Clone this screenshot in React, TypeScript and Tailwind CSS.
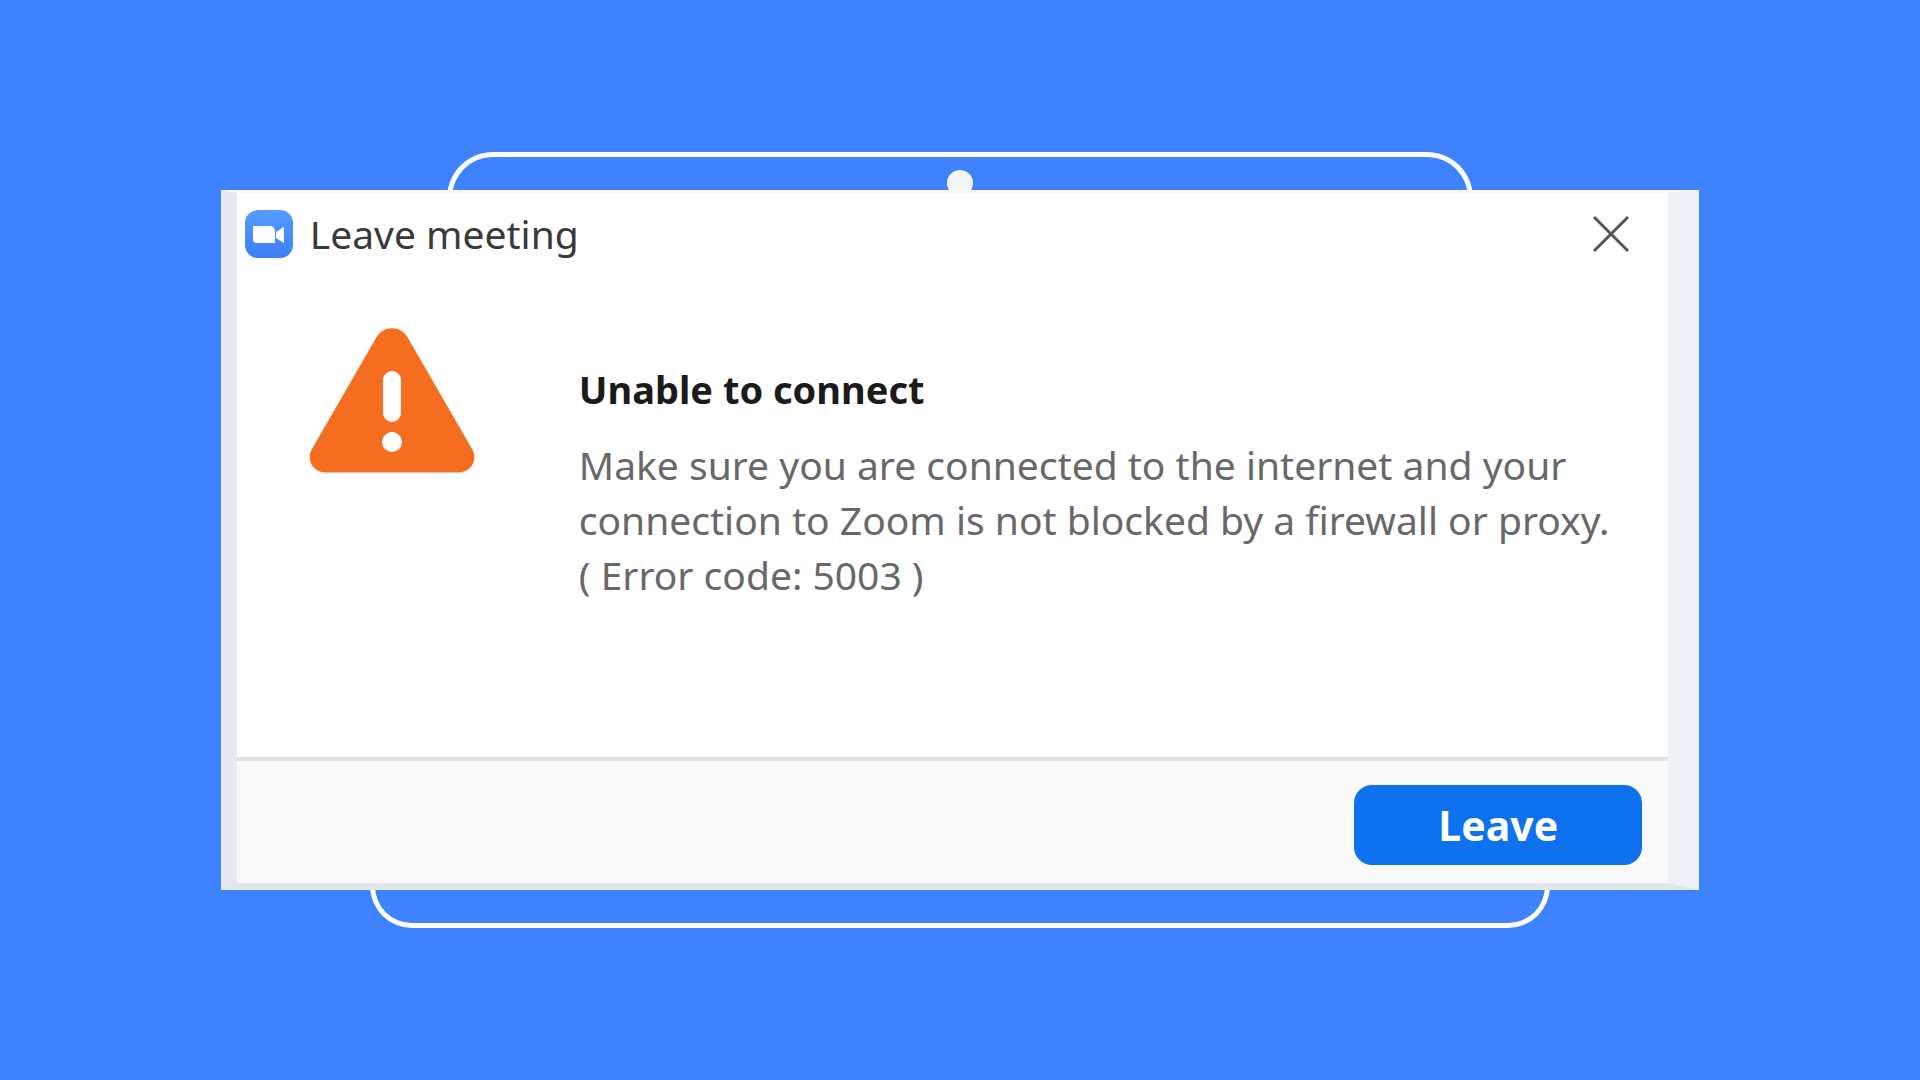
import React, { useState } from 'react';

function ZoomLogo() {
  return (
    <svg viewBox="0 0 48 48" className="size-12 shrink-0" aria-hidden="true">
      <defs>
        <linearGradient id="logo-fill" x1="0" y1="0" x2="0" y2="1">
          <stop offset="0" stopColor="#559dff" />
          <stop offset="1" stopColor="#3d7ef8" />
        </linearGradient>
      </defs>
      <rect width="48" height="48" rx="13" fill="url(#logo-fill)" />
      <path
        d="M8 16h17a5 5 0 0 1 5 5v12H12a4 4 0 0 1-4-4V16zM31 22l8-5v16l-8-5z"
        fill="#fff"
      />
    </svg>
  );
}

function WarningIcon() {
  return (
    <svg viewBox="0 0 166 145" className="w-[166px] shrink-0" aria-hidden="true">
      <path
        d="M67 10C74-3 92-3 99 10L163 121C169 131 163 144.500 149 144.500H17C3 144.500-3 131 3 121Z"
        fill="#f56d20"
      />
      <rect x="74" y="43" width="18" height="51" rx="9" fill="#fff" />
      <circle cx="83" cy="114" r="10" fill="#fff" />
    </svg>
  );
}

export default function App() {
  const [open, setOpen] = useState(true);

  return (
    <main className="flex min-h-screen flex-col items-center justify-center bg-[#3e83fd] font-['Noto_Sans','Open_Sans',sans-serif]">
      {/* Laptop outline behind the dialog */}
      <div className="-mb-4 flex h-[54px] w-[53.4%] justify-center rounded-t-[46px] border-5 border-b-0 border-white pt-[13px]">
        <span className="size-[26px] rounded-full bg-[#f3f5f9]" />
      </div>

      {open && (
        <section
          role="dialog"
          aria-labelledby="dialog-title"
          className="relative flex w-[77%] flex-col border-t-3 border-r-[31px] border-b-[7px] border-l-[16px] border-t-[#f8f8fc] border-r-[#eef2f7] border-b-[#e3e7ed] border-l-[#e5e9f3] bg-white"
        >
          <header className="flex h-[82px] items-center justify-between pr-[38px] pl-2">
            <div className="flex items-center gap-[17px]">
              <ZoomLogo />
              <h1 id="dialog-title" className="text-[39px] leading-[48px] text-[#3a3a3a]">
                Leave meeting
              </h1>
            </div>
            <button type="button" aria-label="Close" onClick={() => setOpen(false)}>
              <svg viewBox="0 0 38 38" className="size-[38px]" aria-hidden="true">
                <path d="M2 2l34 34M36 2L2 36" stroke="#555" strokeWidth="3" />
              </svg>
            </button>
          </header>

          <div className="flex min-h-[482px] items-start gap-[104px] pt-[53px] pl-[72px]">
            <WarningIcon />
            <div className="pt-[33px]">
              <h2 className="text-[38px] leading-[56px] font-bold text-[#1b1b1b]">
                Unable to connect
              </h2>
              <p className="mt-5 text-[39px] leading-[55px] text-[#686868]">
                Make sure you are connected to the internet and your
                <br />
                connection to Zoom is not blocked by a firewall or proxy.
                <br />( Error code: 5003 )
              </p>
            </div>
          </div>

          <footer className="flex justify-end border-t-4 border-[#e2e2e2] bg-[#f9f9f9] pt-6 pr-[26px] pb-[18px]">
            <button
              type="button"
              onClick={() => setOpen(false)}
              className="h-20 w-[288px] rounded-[18px] bg-[#0e71ee] text-[41px] leading-[48px] font-bold text-white"
            >
              Leave
            </button>
          </footer>
        </section>
      )}

      <div className="-mt-4 h-[54px] w-[61.5%] rounded-b-[42px] border-5 border-t-0 border-white" />
    </main>
  );
}
